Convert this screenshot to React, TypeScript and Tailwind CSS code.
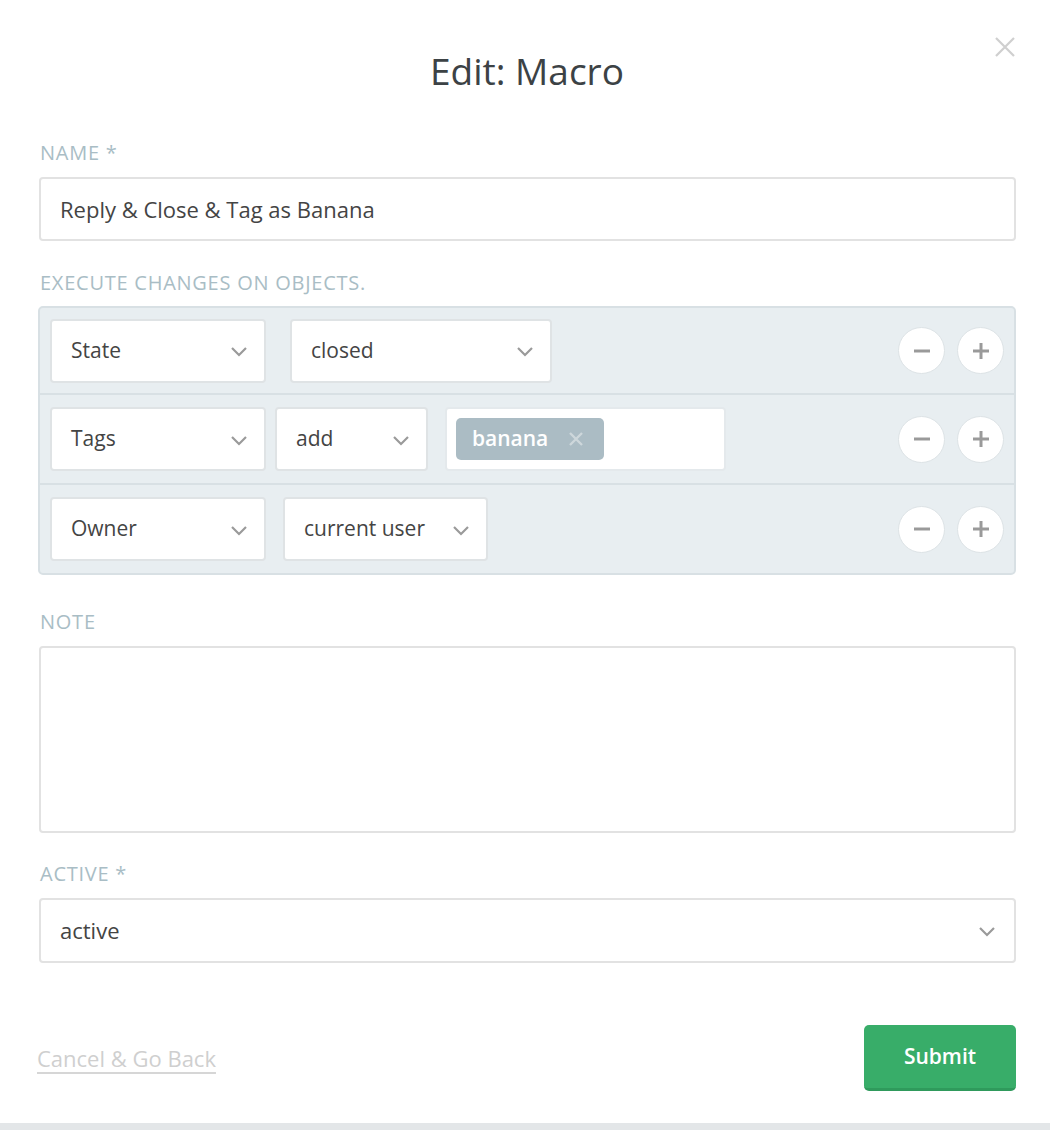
import React from "react";

const font = { fontFamily: '"Open Sans", "Noto Sans", sans-serif' };

function Chevron({ className = "" }: { className?: string }) {
  return (
    <svg width="18" height="12" viewBox="0 0 18 12" className={className}>
      <path d="M2 2 L9 9 L16 2" fill="none" stroke="#9a9a9a" strokeWidth="2.2" />
    </svg>
  );
}

function Select({ label, width, gapLeft }: { label: string; width: string; gapLeft?: string }) {
  return (
    <div
      className={`${width} ${gapLeft ?? ""} h-[64px] shrink-0 bg-white border-2 border-[#dfe3e5] rounded-[4px] flex items-center justify-between pl-[19px] pr-[16px]`}
    >
      <span className="text-[21px] text-[#444]">{label}</span>
      <Chevron className="mt-[3px]" />
    </div>
  );
}

function CircleBtn({ kind }: { kind: "minus" | "plus" }) {
  return (
    <div className="w-[47px] h-[47px] rounded-full bg-white border border-[#dde3e6] flex items-center justify-center">
      <svg width="20" height="20" viewBox="0 0 20 20">
        <path d="M2 10 H18" stroke="#9a9a9a" strokeWidth="3" />
        {kind === "plus" && <path d="M10 2 V18" stroke="#9a9a9a" strokeWidth="3" />}
      </svg>
    </div>
  );
}

function Label({ children }: { children: React.ReactNode }) {
  return (
    <div className="ml-[2px] text-[20px] tracking-[0.75px] text-[#a9bdc5] uppercase leading-none">{children}</div>
  );
}

export default function App() {
  return (
    <div className="w-[1050px] h-[1130px] bg-white relative overflow-hidden" style={font}>
      <div className="absolute right-[34px] top-[36px]">
        <svg width="22" height="22" viewBox="0 0 22 22">
          <path d="M2 2 L20 20 M20 2 L2 20" stroke="#cfcfcf" strokeWidth="2.2" />
        </svg>
      </div>
      <div className="pl-[38px] pr-[34px] pt-[52px] flex flex-col">
        <h1 className="text-center text-[37px] text-[#3c4245] leading-none">Edit: Macro</h1>

        <div className="mt-[54px]">
          <Label>NAME *</Label>
        </div>
        <div className="mt-[14px] ml-[1px] h-[64px] border-2 border-[#e2e2e2] rounded-[4px] flex items-center pl-[19px]">
          <span className="text-[22px] text-[#444]">Reply &amp; Close &amp; Tag as Banana</span>
        </div>

        <div className="mt-[32px]">
          <Label>Execute changes on objects.</Label>
        </div>
        <div className="mt-[13px] border-2 border-[#d8e0e4] rounded-[5px] bg-[#e8eef1] flex flex-col">
          <div className="h-[87px] flex items-center pl-[10px] pr-[10px] border-b-2 border-[#d8e0e4]">
            <Select label="State" width="w-[216px]" />
            <Select label="closed" width="w-[262px]" gapLeft="ml-[24px]" />
            <div className="ml-auto flex gap-[12px]">
              <CircleBtn kind="minus" />
              <CircleBtn kind="plus" />
            </div>
          </div>
          <div className="h-[90px] flex items-center pl-[10px] pr-[10px] border-b-2 border-[#d8e0e4]">
            <Select label="Tags" width="w-[216px]" />
            <Select label="add" width="w-[153px]" gapLeft="ml-[9px]" />
            <div className="ml-[17px] w-[281px] h-[64px] bg-white border-2 border-[#e4e9ec] rounded-[4px] flex items-center pl-[9px]">
              <div className="h-[42px] w-[148px] bg-[#abbcc4] rounded-[5px] flex items-center pl-[16px]">
                <span className="text-[21px] font-semibold text-white">banana</span>
                <svg width="16" height="16" viewBox="0 0 16 16" className="ml-[20px]">
                  <path d="M2 2 L14 14 M14 2 L2 14" stroke="#cdd7db" strokeWidth="2.4" />
                </svg>
              </div>
            </div>
            <div className="ml-auto flex gap-[12px]">
              <CircleBtn kind="minus" />
              <CircleBtn kind="plus" />
            </div>
          </div>
          <div className="h-[88px] flex items-center pl-[10px] pr-[10px]">
            <Select label="Owner" width="w-[216px]" />
            <Select label="current user" width="w-[205px]" gapLeft="ml-[17px]" />
            <div className="ml-auto flex gap-[12px]">
              <CircleBtn kind="minus" />
              <CircleBtn kind="plus" />
            </div>
          </div>
        </div>

        <div className="mt-[37px]">
          <Label>Note</Label>
        </div>
        <div className="mt-[14px] ml-[1px] h-[187px] border-2 border-[#e2e2e2] rounded-[4px]" />

        <div className="mt-[31px]">
          <Label>Active *</Label>
        </div>
        <div className="mt-[14px] ml-[1px] h-[65px] border-2 border-[#e2e2e2] rounded-[4px] flex items-center justify-between pl-[19px] pr-[18px]">
          <span className="text-[22px] text-[#444]">active</span>
          <Chevron className="mt-[3px]" />
        </div>

        <div className="mt-[62px] ml-[1px] flex items-center justify-between">
          <a className="text-[22px] text-[#cfcfcf] underline underline-offset-[5px] decoration-[#d6d6d6] -ml-[2px]">
            Cancel &amp; Go Back
          </a>
          <button className="w-[152px] h-[66px] rounded-[5px] bg-[#38ad69] border-b-[3px] border-[#2f9a5c] text-white text-[21px] font-semibold">
            Submit
          </button>
        </div>
      </div>
      <div className="absolute left-0 right-0 bottom-0 h-[7px] bg-[#e3e6e8]" />
    </div>
  );
}
